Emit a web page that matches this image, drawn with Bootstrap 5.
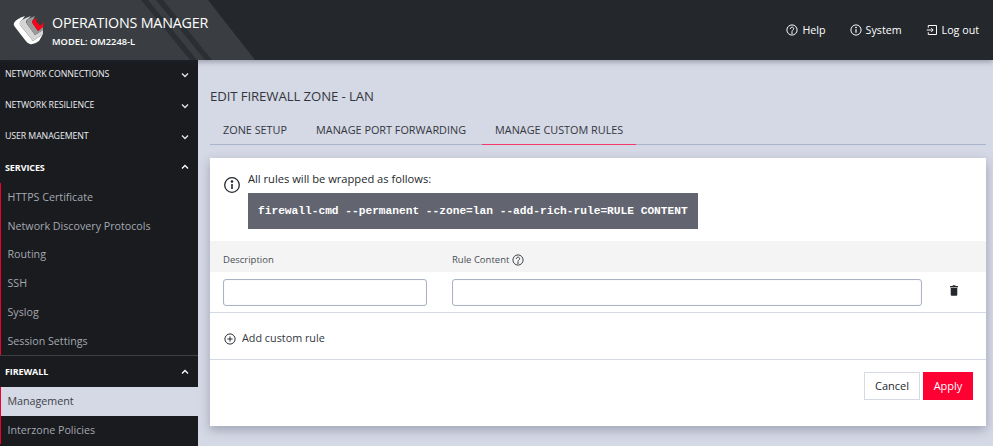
<!DOCTYPE html>
<html lang="en">
<head>
<meta charset="utf-8">
<title>Edit Firewall Zone</title>
<link rel="stylesheet" href="https://cdn.jsdelivr.net/npm/bootstrap@5.3.0/dist/css/bootstrap.min.css">
<style>
html,body{height:446px;overflow:hidden}
body{font-family:"Open Sans",sans-serif;background:#d5d8e5;color:#24282c;font-size:12px}
.app-top{height:60px;background:#24282c;color:#fff;position:relative;z-index:2;box-shadow:0 2px 5px rgba(40,45,60,.35)}
.top-deco{position:absolute;left:0;top:0;width:260px;height:60px}
.brand-wrap{position:relative;padding-left:13px;gap:6px}
.brand-name{font-size:14.3px;line-height:20px;letter-spacing:-.2px;margin-top:1px}
.brand-model{font-size:9.3px;line-height:14px;font-weight:600;margin-top:2px}
.top-links{gap:24px;padding-right:14px;font-size:10.7px;margin-top:1px}
.top-links a{color:#fff;text-decoration:none;display:flex;align-items:center;gap:4px}
.app-body{height:386px}
.side{width:198px;flex:none;background:#191b1e;overflow:hidden}
.side-head{height:31px;padding:0 9px 0 5px;color:#eceef2;font-size:8.8px;text-transform:uppercase;display:flex;align-items:center;justify-content:space-between;letter-spacing:-.1px}
.side-head:first-child{margin-top:-1px}
.side-head.is-open{color:#fff;font-weight:700;font-size:9px;height:30.5px}
.side-sub{border-left:1px solid #f0002f}
.side-item{height:28.8px;display:flex;align-items:center;padding-left:6.5px;font-size:10.7px;color:#a4a8b1}
.side-item.is-active{background:#d5d8e5;color:#3b3f46}
.side-rule{border-top:1px solid #3c3f43}
.main-pane{padding:0 7px 0 12px;min-width:0}
.page-title{font-size:13.2px;font-weight:400;line-height:20px;margin:26px 0 0;color:#33373d;letter-spacing:-.1px}
.tab-row{margin-top:13px;height:26px;border-bottom:1px solid #a9b3cb;display:flex}
.tab-link{padding:3px 13px 0;font-size:10.85px;line-height:16px;color:#33373d;text-transform:uppercase;height:26px;margin-right:3px}
.tab-link.is-current{border-bottom:1px solid #f5386a;margin-right:0}
.panel{margin-top:13px;height:268px;background:#fff;box-shadow:0 4px 10px rgba(60,65,90,.35)}
.info-row{padding:14px 13px 0;gap:7px;height:83px}
.info-icon{flex:none;margin-top:4px}
.info-text{font-size:11.15px;line-height:14px;color:#24282c}
.code-box{background:#62656f;color:#fff;height:36px;width:450px;margin-top:7px;padding:0 10px;display:flex;align-items:center;font-family:"Liberation Mono",monospace;font-size:11.2px;font-weight:700;white-space:pre}
.col-heads{height:31px;background:#f4f4f4;padding:7px 13px 0;display:flex;align-items:center;font-size:9.5px;color:#4a4e55}
.col-a{width:229px;flex:none}
.col-b{flex:1;display:flex;align-items:center;gap:3px}
.rule-row{height:41px;padding:7px 0 0 13px;border-bottom:1px solid #d5d8e5;display:flex;align-items:flex-start}
.field{height:27px;border:1px solid #a9b3c4;border-radius:3px;background:#fff;padding:0 6px;font-size:11px;display:block;flex:none;box-shadow:inset 0 0 1px rgba(80,90,110,.2)}
.field-a{width:204px;margin-right:25px}
.field-b{width:470px}
.trash-cell{width:64px;flex:none;display:flex;justify-content:center;padding-top:6px}
.add-row{height:47px;padding:5px 14px 0;border-bottom:1px solid #d5d8e5;display:flex;align-items:center;gap:6px;font-size:10.8px;color:#33373d}
.foot-row{padding:12px 13px 0;display:flex;justify-content:flex-end;gap:3px}
.btn-plain,.btn-hot{height:28px;padding:0;font-size:11px;line-height:26px;border-radius:0}
.btn-plain{width:56px;background:#fff;border:1px solid #d5d8e5;color:#24282c}
.btn-hot{width:50px;background:#ff0033;border:1px solid #ff0033;color:#fff}
</style>
</head>
<body>
<header class="app-top d-flex align-items-center justify-content-between">
  <svg class="top-deco" viewBox="0 0 260 60" aria-hidden="true">
    <polygon points="0,0 208,0 255,60 0,60" fill="#3a3e42"/>
    <polygon points="141,0 148,0 197,60 190,60" fill="#2b2f33"/>
    <polygon points="156,0 163,0 212,60 205,60" fill="#2b2f33"/>
  </svg>
  <div class="brand-wrap d-flex align-items-center">
    <svg width="33" height="32" viewBox="0 0 33 32" aria-hidden="true">
      <path d="M1 9 Q3 5 12 2 L9 6 Q6 8 7 11 L20 27 L30 20 L26 27 Q21 31 17 30 Q14 29 12 26 L2 13 Q0 11 1 9Z" fill="#fff"/>
      <path d="M9 6 Q12 4 18 2 L15 5 Q12 7 14 10 L22 21 L30 16 L30 20 L20 27 L7 11 Q6 8 9 6Z" fill="#d5d5d5"/>
      <path d="M15 5 L22 2 L20 6 Q18 7 20 10 L25 17 L30 13 L30 16 L22 21 L14 10 Q13 7 15 5Z" fill="#999"/>
      <path d="M20 6 L24 4 L23 7 L27 12 L31 8 L30 13 L25 17 L20 10 Q18.500 7.500 20 6Z" fill="#ff0018"/>
    </svg>
    <div>
      <div class="brand-name">OPERATIONS MANAGER</div>
      <div class="brand-model">MODEL: OM2248-L</div>
    </div>
  </div>
  <nav class="top-links d-flex position-relative">
    <a href="#"><svg width="12" height="12" viewBox="0 0 16 16" fill="none" stroke="#fff" stroke-width="1.300"><circle cx="8" cy="8" r="6.800"/><path d="M5.800 6.200a2.200 2.200 0 1 1 3.400 1.900c-.8.500-1.200.9-1.200 1.900" stroke-linecap="round"/><circle cx="8" cy="12" r=".5" fill="#fff"/></svg>Help</a>
    <a href="#"><svg width="12" height="12" viewBox="0 0 16 16" fill="none" stroke="#fff" stroke-width="1.300"><circle cx="8" cy="8" r="6.800"/><path d="M8 7v4.500" stroke-width="1.600"/><circle cx="8" cy="4.700" r=".6" fill="#fff"/></svg>System</a>
    <a href="#"><svg width="12" height="12" viewBox="0 0 16 16" fill="none" stroke="#fff" stroke-width="1.300"><path d="M3 5V2h11v12H3v-3"/><path d="M1 8h8M7 5.500 9.500 8 7 10.500"/></svg>Log out</a>
  </nav>
</header>
<div class="app-body d-flex">
  <aside class="side">
    <div class="side-head"><span>Network Connections</span><svg width="8" height="6" viewBox="0 0 8 6" fill="none" stroke="#e4e6ea" stroke-width="1.300"><path d="M1 1.500 4 4.500 7 1.500"/></svg></div>
    <div class="side-head"><span>Network Resilience</span><svg width="8" height="6" viewBox="0 0 8 6" fill="none" stroke="#e4e6ea" stroke-width="1.300"><path d="M1 1.500 4 4.500 7 1.500"/></svg></div>
    <div class="side-head"><span>User Management</span><svg width="8" height="6" viewBox="0 0 8 6" fill="none" stroke="#e4e6ea" stroke-width="1.300"><path d="M1 1.500 4 4.500 7 1.500"/></svg></div>
    <div class="side-head is-open"><span>Services</span><svg width="8" height="6" viewBox="0 0 8 6" fill="none" stroke="#fff" stroke-width="1.300"><path d="M1 4.500 4 1.500 7 4.500"/></svg></div>
    <div class="side-sub">
      <div class="side-item">HTTPS Certificate</div>
      <div class="side-item">Network Discovery Protocols</div>
      <div class="side-item">Routing</div>
      <div class="side-item">SSH</div>
      <div class="side-item">Syslog</div>
      <div class="side-item">Session Settings</div>
    </div>
    <div class="side-rule"></div>
    <div class="side-head is-open"><span>Firewall</span><svg width="8" height="6" viewBox="0 0 8 6" fill="none" stroke="#fff" stroke-width="1.300"><path d="M1 4.500 4 1.500 7 4.500"/></svg></div>
    <div class="side-sub">
      <div class="side-item is-active">Management</div>
      <div class="side-item">Interzone Policies</div>
    </div>
  </aside>
  <main class="main-pane flex-grow-1">
    <h1 class="page-title text-uppercase">Edit Firewall Zone - LAN</h1>
    <div class="tab-row">
      <div class="tab-link">Zone Setup</div>
      <div class="tab-link">Manage Port Forwarding</div>
      <div class="tab-link is-current">Manage Custom Rules</div>
    </div>
    <section class="panel">
      <div class="info-row d-flex">
        <svg class="info-icon" width="18" height="18" viewBox="0 0 18 18" fill="none" stroke="#24282c" stroke-width="1.300"><circle cx="9" cy="9" r="7.300"/><path d="M9 8v5" stroke-width="1.600"/><circle cx="9" cy="5.500" r=".7" fill="#24282c"/></svg>
        <div>
          <div class="info-text">All rules will be wrapped as follows:</div>
          <div class="code-box">firewall-cmd --permanent --zone=lan --add-rich-rule=<b>RULE CONTENT</b></div>
        </div>
      </div>
      <div class="col-heads">
        <div class="col-a">Description</div>
        <div class="col-b">Rule Content <svg width="12" height="12" viewBox="0 0 16 16" fill="none" stroke="#3b3f46" stroke-width="1.300"><circle cx="8" cy="8" r="6.800"/><path d="M5.800 6.200a2.200 2.200 0 1 1 3.400 1.900c-.8.500-1.200.9-1.200 1.900" stroke-linecap="round"/><circle cx="8" cy="12" r=".5" fill="#3b3f46"/></svg></div>
      </div>
      <div class="rule-row">
        <input class="field field-a" type="text" aria-label="Description">
        <input class="field field-b" type="text" aria-label="Rule Content">
        <div class="trash-cell"><svg width="8" height="11" viewBox="0 0 9 12" fill="#24282c"><path d="M3 0h3v1h3v1.300H0V1h3z"/><path d="M.8 3h7.400v7.800Q8.200 12 7 12H2Q.8 12 .8 10.800z"/></svg></div>
      </div>
      <div class="add-row"><svg width="12" height="12" viewBox="0 0 16 16" fill="none" stroke="#24282c" stroke-width="1.300"><circle cx="8" cy="8" r="6.800"/><path d="M8 4.500v7M4.500 8h7"/></svg>Add custom rule</div>
      <div class="foot-row">
        <button type="button" class="btn btn-plain">Cancel</button>
        <button type="button" class="btn btn-hot">Apply</button>
      </div>
    </section>
  </main>
</div>
<script src="https://cdn.jsdelivr.net/npm/bootstrap@5.3.0/dist/js/bootstrap.bundle.min.js"></script>
</body>
</html>
